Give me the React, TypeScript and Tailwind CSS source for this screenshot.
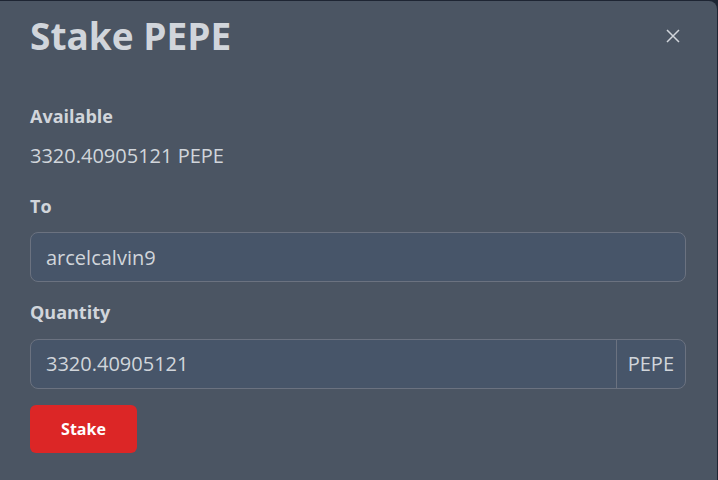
import React from "react";

const font = { fontFamily: '"Open Sans", "Noto Sans", sans-serif' };

// Modal de stake
const StakeModal: React.FC = () => {
  return (
    <div className="min-h-[479px] rounded-tr-lg bg-[#4b5563] pl-[30px] pr-[31px]" style={font}>
      <div className="flex items-center justify-between pt-[11px]">
        <h2 className="text-[37px] leading-[48px] font-bold text-[#d1d5db]">Stake PEPE</h2>
        <button className="mr-[5px] text-[#d1d5db]">
          <svg width="16" height="16" viewBox="0 0 16 16" fill="none" stroke="currentColor" strokeWidth="1.5">
            <path d="M2 2L14 14M14 2L2 14" />
          </svg>
        </button>
      </div>

      <div className="mt-[42px] text-[18px] leading-[28px] font-bold text-[#d1d5db]">Available</div>
      <div className="mt-[12px] text-[20px] leading-[28px] text-[#d1d5db]">3320.40905121 PEPE</div>

      <div className="mt-[22px] text-[18px] leading-[28px] font-bold text-[#d1d5db]">To</div>
      <input
        className="mt-[12px] block h-[50px] w-full rounded-lg border border-[#6b7280] bg-[#475569] px-[15px] text-[20px] text-[#d1d5db] outline-none"
        defaultValue="arcelcalvin9"
      />

      <div className="mt-[16px] text-[18px] leading-[28px] font-bold text-[#d1d5db]">Quantity</div>
      <div className="mt-[13px] flex h-[50px] rounded-lg border border-[#6b7280] bg-[#475569]">
        <input
          className="min-w-0 flex-1 bg-transparent px-[15px] text-[20px] text-[#d1d5db] outline-none"
          defaultValue="3320.40905121"
        />
        <span className="flex items-center border-l border-[#6b7280] px-[11px] text-[20px] text-[#d1d5db]">PEPE</span>
      </div>

      <button className="mt-[16px] h-[48px] w-[107px] rounded-md bg-[#dc2626] text-[16px] font-bold text-white">
        Stake
      </button>
    </div>
  );
};

export default function App() {
  return (
    <div className="min-h-screen bg-[#1e2533] pt-px pr-px">
      <StakeModal />
    </div>
  );
}
